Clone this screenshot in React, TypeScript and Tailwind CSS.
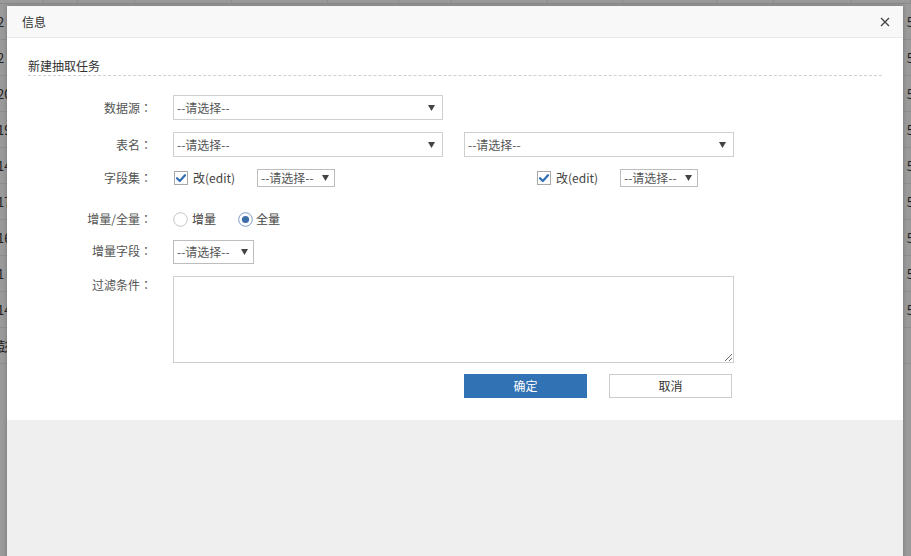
import React from 'react';

const font = { fontFamily: '"Noto Sans CJK SC", "Noto Sans", sans-serif' };
const colonFont = { fontFamily: '"Noto Sans CJK TC", "Noto Sans CJK SC", sans-serif' };

const bgRows = [
  { l: '2', r: '5' },
  { l: '2', r: '5' },
  { l: '20', r: '5' },
  { l: '19', r: '5' },
  { l: '14', r: '5' },
  { l: '17', r: '5' },
  { l: '16', r: '5' },
  { l: '1', r: '5' },
  { l: '14', r: '5' },
  { l: '彭', r: '' },
];

const topCols = [45, 35, 58, 99, 98, 73, 54, 98, 77, 96, 58, 80, 60];

const Arrow: React.FC = () => (
  <svg width="7" height="6" viewBox="0 0 7 6">
    <path d="M0 0 H7 L3.5 6 Z" fill="#444" />
  </svg>
);

const Select: React.FC<{ w: string; h?: string }> = ({ w, h = 'h-[25px]' }) => (
  <div className={`${w} ${h} flex items-center justify-between border border-[#cfcfcf] bg-white pl-[3px] pr-[7px] text-[12px] text-[#555]`}>
    <span>--请选择--</span>
    <Arrow />
  </div>
);

const SmallSelect: React.FC<{ w: string; h: string }> = ({ w, h }) => (
  <div className={`${w} ${h} flex items-center justify-between border border-[#bdbdbd] bg-white pl-[3px] pr-[5px] text-[12px] leading-none text-[#555]`}>
    <span>--请选择--</span>
    <Arrow />
  </div>
);

const Check: React.FC = () => (
  <svg width="14" height="14" viewBox="0 0 14 14">
    <rect x="0.5" y="0.5" width="13" height="13" fill="#fff" stroke="#a8a8a8" />
    <path d="M3 7.2 L5.8 10 L11 4.2" fill="none" stroke="#2f6db5" strokeWidth="2.2" strokeLinecap="round" strokeLinejoin="round" />
  </svg>
);

const Radio: React.FC<{ on?: boolean }> = ({ on }) => (
  <svg width="15" height="15" viewBox="0 0 15 15">
    <circle cx="7.5" cy="7.5" r="6.8" fill="#fff" stroke={on ? '#7d9cc4' : '#c6c6c6'} />
    {on && <circle cx="7.5" cy="7.5" r="3.6" fill="#3d6ea8" />}
  </svg>
);

// label column, the full-width colon is centred in its box like the original
const Label: React.FC<{ text: string; className?: string }> = ({ text, className = '' }) => (
  <div className={`w-[145px] shrink-0 text-right text-[12px] leading-[18px] text-[#555] ${className}`}>
    {text}
    <span style={colonFont}>：</span>
  </div>
);

const Field: React.FC = () => (
  <div className="flex h-[18px] items-center">
    <Check />
    <span className="ml-[5px] w-[64px] text-[12px] leading-[18px] text-[#444]">改(edit)</span>
    <SmallSelect w="w-[78px]" h="h-[18px]" />
  </div>
);

const App: React.FC = () => {
  return (
    <div className="relative h-[556px] w-[911px] overflow-hidden bg-[#9a9a9a]" style={font}>
      {/* page under the overlay */}
      <div className="flex h-[4px] border-b border-[#8a8a8a]">
        {topCols.map((w, i) => (
          <div key={i} className="h-full border-r border-[#8c8c8c]" style={{ width: w }} />
        ))}
      </div>
      {bgRows.map((r, i) => (
        <div key={i} className="flex h-[36px] items-center justify-between border-b border-[#8e8e8e] text-[13px] text-[#222]">
          <span className="-ml-[3px]">{r.l}</span>
          <span className="-mr-[3px]">{r.r}</span>
        </div>
      ))}

      {/* modal */}
      <div className="absolute left-[7px] top-[6px] flex h-[560px] w-[896px] flex-col bg-[#efefef] shadow-[0_0_4px_rgba(0,0,0,0.25)]">
        <div className="flex h-[32px] shrink-0 items-center justify-between border-b border-[#eaeaea] bg-[#f8f8f8] pl-[15px] pr-[13px]">
          <span className="text-[12px] text-[#333]">信息</span>
          <svg width="10" height="10" viewBox="0 0 10 10">
            <path d="M1 1 L9 9 M9 1 L1 9" stroke="#444" strokeWidth="1.3" />
          </svg>
        </div>

        <div className="flex h-[382px] shrink-0 flex-col bg-white">
          <div className="mx-[21px] mt-[19px] border-b border-dashed border-[#d0d0d0] pb-[1px] text-[12px] leading-[17px] text-[#333]">
            新建抽取任务
          </div>

          <div className="mt-[19px] flex flex-col gap-[12px]">
            <div className="flex h-[25px] items-center">
              <Label text="数据源" />
              <div className="ml-[21px]">
                <Select w="w-[270px]" />
              </div>
            </div>

            <div className="flex h-[25px] items-center">
              <Label text="表名" />
              <div className="ml-[21px] flex gap-[21px]">
                <Select w="w-[270px]" />
                <Select w="w-[270px]" />
              </div>
            </div>

            <div className="flex h-[18px] items-center">
              <Label text="字段集" />
              <div className="ml-[22px] flex">
                <Field />
                <div className="ml-[202px]">
                  <Field />
                </div>
              </div>
            </div>

            <div className="mt-[11px] flex h-[18px] items-center">
              <Label text="增量/全量" />
              <div className="ml-[21px] flex items-center text-[12px] leading-[18px] text-[#444]">
                <Radio />
                <span className="ml-[4px]">增量</span>
                <span className="ml-[22px] flex"><Radio on /></span>
                <span className="ml-[3px]">全量</span>
              </div>
            </div>

            <div className="flex h-[24px] items-center">
              <Label text="增量字段" className="-mt-[2px]" />
              <div className="ml-[21px]">
                <SmallSelect w="w-[81px]" h="h-[24px]" />
              </div>
            </div>

            <div className="flex items-start">
              <Label text="过滤条件" />
              <textarea className="ml-[21px] block h-[87px] w-[561px] border border-[#cfcfcf] outline-none" />
            </div>

            <div className="-mt-[1px] ml-[457px] flex gap-[22px]">
              <button className="h-[24px] w-[123px] bg-[#3172b4] text-[12px] text-white">确定</button>
              <button className="h-[24px] w-[123px] border border-[#cccccc] bg-white text-[12px] text-[#333]">取消</button>
            </div>
          </div>
        </div>
      </div>
    </div>
  );
};

export default App;
